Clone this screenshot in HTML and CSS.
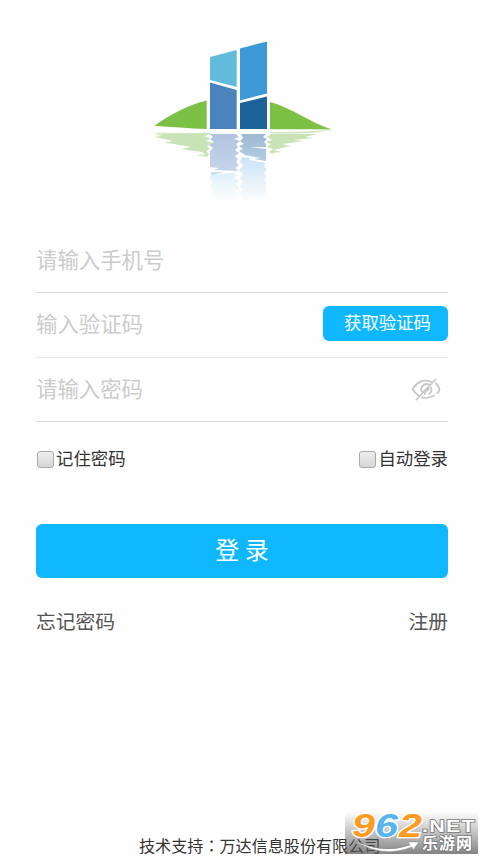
FILE: index.html
```html
<!DOCTYPE html>
<html lang="zh-CN">
<head>
<meta charset="utf-8">
<title>登录</title>
<link rel="stylesheet" href="styles.css">
</head>
<body>
<main class="page">
  <header class="brand">
    <svg class="logo" viewBox="140 30 200 190" width="200" height="190">
      <defs>
        <linearGradient id="r1" x1="0" y1="0" x2="0" y2="1"><stop offset="0" stop-color="#b0c3df"/><stop offset="1" stop-color="#c6d5ea"/></linearGradient>
        <linearGradient id="r2" x1="0" y1="0" x2="0" y2="1"><stop offset="0" stop-color="#9db9d2"/><stop offset="1" stop-color="#b2cce2"/></linearGradient>
        <linearGradient id="r3" x1="0" y1="0" x2="0" y2="1"><stop offset="0" stop-color="#cbe3f6"/><stop offset="1" stop-color="#fff"/></linearGradient>
        <linearGradient id="r4" x1="0" y1="0" x2="0" y2="1"><stop offset="0" stop-color="#ddeff8"/><stop offset="1" stop-color="#fff"/></linearGradient>
      </defs>
      <path fill="#63bbdc" d="M210 57L236.700 50V87L210 80Z"/>
      <path fill="#3d99d5" d="M240 48.500L267 41.500V93.500L240 100.500Z"/>
      <path fill="#4b83bc" d="M210 82.500L236.700 90V129H210Z"/>
      <path fill="#1d6299" d="M240 103L267 96.500V129H240Z"/>
      <path fill="#7dc046" d="M154.500 125.700C169 115 190 104 206.700 100.500V129C189 128.300 171 127 154.500 125.700Z"/>
      <path fill="#7dc046" d="M270 102C292 108 309 122 332 129.500C311 129 291 129.200 270 129.200Z"/>
      <path fill="#d5e9c8" d="M149 131.500Q177 134 208 132.500L213 134L207 135Q175 135 149 131.500ZM332 130Q304 135 273 133.500L269 132Q300 132 332 130Z"/>
      <path fill="#c8e3b5" d="M154 133.500L208 133.800L205 137L211 138L206 141L213 143L207 146L210 149L206 151L209 154L207 157L196 155L206 154.500L202 152L181 149L191 147L174 144L164 143L173 141L160 138L154 137L162 136Z"/>
      <path fill="#c8e3b5" d="M271 134L317 134L305 137L314 138L293 140L304 141L282 144L290 146L274 150L281 152L272 153L276 156L269 152L273 149L267 147L271 144L266 142L272 140L267 137Z"/>
      <path fill="url(#r1)" d="M210 134H236L239 137L234 139L240 141L236 144L238 147L235 150L239 153L235 156L238 159L236 162L239 165L235 168L239 171L214 170L219 168L210 167V151L213 148L209 145L214 142L210 139L213 137Z"/>
      <path fill="url(#r2)" d="M241 134H266L263 137L267 139L264 142L266 144V147H249L266 149V161L254 159L260 158L245 155L239 151L243 149L239 146L244 144L240 141L243 138Z"/>
      <path fill="url(#r3)" d="M242 157L250 158L249 160L266 163L264 166L267 169L264 173L267 176L264 180L267 183L265 187L267 190L264 195V204H241L243 197L239 194L243 190L240 186L243 182L240 178L243 174L239 170L243 166L240 162Z"/>
      <path fill="url(#r4)" d="M211 172L223 173L213 175L232 173L237 175L234 178L239 181L236 184L239 188L235 191L239 194L235 198L238 202H212L214 198L210 193L213 190L210 186L213 182L210 179Z"/>
      <path fill="#c1d4e8" d="M210 173L224 171.500L213 174.500Z"/>
    </svg>
  </header>

  <form class="form">
    <div class="field"><span class="hint">请输入手机号</span></div>
    <div class="field field-code"><span class="hint">输入验证码</span><button type="button" class="code-button">获取验证码</button></div>
    <div class="field field-password"><span class="hint">请输入密码</span>
      <svg class="eye" viewBox="0 0 30 24" width="30" height="24" fill="none" stroke="#c8c8c8" stroke-width="1.800" stroke-linecap="round">
        <path d="M20 3.800C12 0.500 5 5 1.500 11Q3.500 15 7.500 17.500M25 5.500Q27.500 8 28.500 11Q28 13.500 26.500 15M11 19.300Q17 21 23 17.500"/>
        <path d="M11.500 14.500C8 10 12.500 4.500 18 6.500M20 9.500C20.800 12 20 14.500 18.500 15.800M13.800 16V12.500Q17.500 13.500 17.800 9.500M5.500 21.500L24.500 1.500"/>
      </svg>
    </div>
    <div class="options">
      <label class="option"><span class="box"></span>记住密码</label>
      <label class="option"><span class="box"></span>自动登录</label>
    </div>
    <button type="button" class="login">登 录</button>
    <nav class="links"><a>忘记密码</a><a>注册</a></nav>
  </form>

  <footer class="footer">技术支持<span class="colon" lang="zh-TW">：</span>万达信息股份有限公司</footer>

  <div class="watermark">
    <svg viewBox="0 0 133 42" width="133" height="42">
      <defs><linearGradient id="wm" x1="0" y1="0" x2="0" y2="1"><stop offset="0" stop-color="#555" stop-opacity="0"/><stop offset="1" stop-color="#555" stop-opacity=".72"/></linearGradient></defs>
      <rect width="133" height="42" fill="url(#wm)"/>
      <path d="M8 28Q38 43 65 33L63 30L74 30L68 38L67 35Q37 47 8 28Z" fill="#fff" stroke="#888" stroke-width=".5"/>
      <g class="digits">
        <text x="7" y="25" textLength="23" lengthAdjust="spacingAndGlyphs" fill="#ff9a22">9</text>
        <text x="30" y="25" textLength="23" lengthAdjust="spacingAndGlyphs" fill="#55b5ec">6</text>
        <text x="54" y="25" textLength="23" lengthAdjust="spacingAndGlyphs" fill="#ff9a22">2</text>
      </g>
      <text class="net" x="77" y="20" textLength="54" lengthAdjust="spacingAndGlyphs">.NET</text>
      <text class="site" x="77" y="37" textLength="50">乐游网</text>
    </svg>
  </div>
</main>
</body>
</html>
```
FILE: styles.css
```css
* { box-sizing: border-box; }

body {
  margin: 0;
  background: #fefefe;
  color: #333;
  font-family: "Noto Sans CJK SC", sans-serif;
}

.page {
  position: relative;
  display: flex;
  flex-direction: column;
  height: 860px;
  padding: 0 36px;
  overflow: hidden;
}

.brand {
  height: 228px;
  padding: 30px 0 0 104px;
}

.logo, .eye, .watermark svg { display: block; }

.watermark svg { overflow: visible; }

.form {
  display: flex;
  flex-direction: column;
}

.field {
  display: flex;
  align-items: center;
  justify-content: space-between;
  height: 65px;
  border-bottom: 1px solid #d9d9d9;
}

.field-code { border-color: #e8e8e8; }

.field-password {
  height: 64px;
  padding-right: 7px;
}

.hint {
  padding-bottom: 3px;
  color: #ccc;
  font-size: 21.4px;
  line-height: 32px;
}

.field-code .hint { padding-bottom: 5px; }

button {
  border: 0;
  padding: 0;
  background: #0fb7ff;
  color: #fff;
  font-family: inherit;
}

.code-button {
  width: 125px;
  height: 35px;
  padding: 0 0 3px 4px;
  margin-bottom: 3px;
  border-radius: 6px;
  font-size: 17.4px;
  line-height: 32px;
}

.options {
  display: flex;
  justify-content: space-between;
  height: 102px;
  padding: 23px 0 0 1px;
}

.option {
  display: flex;
  height: 26px;
  gap: 2px;
  font-size: 17.4px;
  line-height: 26px;
}

.box {
  width: 17px;
  height: 17px;
  margin-top: 6px;
  border: 1.5px solid #aaa;
  border-radius: 3px;
  background: linear-gradient(#eee, #d6d6d6);
}

.login {
  height: 54px;
  padding: 0 0 4px;
  border-radius: 6px;
  font-size: 24px;
  line-height: 50px;
}

.links {
  display: flex;
  justify-content: space-between;
  padding-top: 28px;
  color: #555;
  font-size: 19.8px;
  line-height: 30px;
}

.footer {
  margin: auto 0 3px 103px;
  font-size: 16.1px;
  line-height: 24px;
  white-space: nowrap;
}

.colon { font-family: "Noto Sans CJK TC", sans-serif; }

.watermark {
  position: absolute;
  left: 345px;
  top: 812px;
}

.digits {
  font: italic bold 33px "Liberation Sans", sans-serif;
  stroke: #fff;
  stroke-width: 2.5px;
  paint-order: stroke;
}

.net {
  font: bold 17px "Liberation Sans", sans-serif;
  letter-spacing: 1px;
  fill: #fff;
  stroke: #777;
  stroke-width: 1.5px;
  paint-order: stroke;
}

.site {
  font: bold 16px "Noto Sans CJK SC", sans-serif;
  fill: #fff;
  stroke: #777;
  stroke-width: 1.5px;
  paint-order: stroke;
}
```
